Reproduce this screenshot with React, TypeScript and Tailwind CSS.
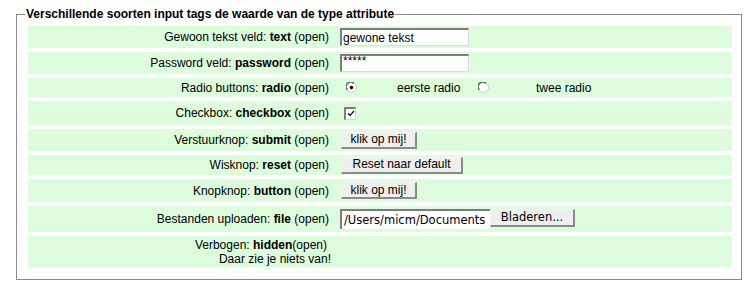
import React from 'react';

const rowBase = 'flex items-center bg-[#dcfcdc]';

const Radio = ({ checked }: { checked?: boolean }) => (
  <svg width="11" height="11" viewBox="0 0 11 11" className="block">
    <circle cx="5.5" cy="5.5" r="5" fill="#ffffff" stroke="#c8c8c8" strokeWidth="1" />
    <path d="M1.3 7.8 A4.6 4.6 0 0 1 7.8 1.3" fill="none" stroke="#6a6a6a" strokeWidth="1.6" />
    {checked && <circle cx="5.5" cy="5.5" r="1.7" fill="#000000" />}
  </svg>
);

const Checkbox = () => (
  <div className="w-[12px] h-[13px] bg-white border-t-2 border-l-2 border-r border-b border-t-[#7c7c7c] border-l-[#7c7c7c] border-r-[#d6d6d6] border-b-[#d6d6d6] flex items-center justify-center">
    <svg width="8" height="7" viewBox="0 0 8 7">
      <path d="M1 3.5 L3 5.5 L7 1" fill="none" stroke="#000" strokeWidth="1.2" />
    </svg>
  </div>
);

const Btn = ({ children, w }: { children: React.ReactNode; w: string }) => (
  <button
    type="button"
    className={`${w} h-[17px] bg-[#eeeeee] border-t border-l border-r-2 border-b-2 border-t-[#f4f4f4] border-l-[#f4f4f4] border-r-[#8a8a8a] border-b-[#8a8a8a] text-[12px] leading-none text-black flex items-center justify-center pb-[1px]`}
  >
    {children}
  </button>
);

const Label = ({ pre, bold }: { pre: string; bold: string }) => (
  <div className="w-[301px] text-right shrink-0">
    {pre} <b>{bold}</b> (open)
  </div>
);

export default function App() {
  return (
    <div className="w-[752px] h-[295px] bg-white font-['Liberation_Sans',Arial,sans-serif] text-[12px] text-black pt-[7px]">
      <fieldset className="ml-[16px] w-[726px] border border-[#8a8a8a] pl-[11px] pr-[9px] pb-[12px]">
        <legend className="-ml-[3px] px-[1px] text-[12px] font-bold leading-[14px]">
          Verschillende soorten input tags de waarde van de type attribute
        </legend>
        <div className="flex flex-col gap-[4px] mt-[5px]">
          <div className={`${rowBase} h-[22px]`}>
            <Label pre="Gewoon tekst veld:" bold="text" />
            <input
              readOnly
              value="gewone tekst"
              className="ml-[11px] w-[129px] h-[18px] bg-white border-t-2 border-l-2 border-r border-b border-t-[#7c7c7c] border-l-[#7c7c7c] border-r-[#dcdcdc] border-b-[#dcdcdc] px-[1px] text-[12px] leading-none outline-none"
            />
          </div>
          <div className={`${rowBase} h-[22px]`}>
            <Label pre="Password veld:" bold="password" />
            <div className="ml-[11px] w-[129px] h-[18px] bg-white border-t-2 border-l-2 border-r border-b border-t-[#7c7c7c] border-l-[#7c7c7c] border-r-[#dcdcdc] border-b-[#dcdcdc] px-[1px] text-[12px] leading-[11px]">
              *****
            </div>
          </div>
          <div className={`${rowBase} h-[19px]`}>
            <Label pre="Radio buttons:" bold="radio" />
            <div className="ml-[17px]">
              <Radio checked />
            </div>
            <span className="ml-[40px] w-[81px]">eerste radio</span>
            <Radio />
            <span className="ml-[47px]">twee radio</span>
          </div>
          <div className={`${rowBase} h-[24px]`}>
            <Label pre="Checkbox:" bold="checkbox" />
            <div className="ml-[15px]">
              <Checkbox />
            </div>
          </div>
          <div className={`${rowBase} h-[22px]`}>
            <Label pre="Verstuurknop:" bold="submit" />
            <div className="ml-[12px]">
              <Btn w="w-[76px]">klik op mij!</Btn>
            </div>
          </div>
          <div className={`${rowBase} h-[20px]`}>
            <Label pre="Wisknop:" bold="reset" />
            <div className="ml-[12px]">
              <Btn w="w-[122px]">Reset naar default</Btn>
            </div>
          </div>
          <div className={`${rowBase} h-[23px]`}>
            <Label pre="Knopknop:" bold="button" />
            <div className="ml-[12px]">
              <Btn w="w-[76px]">klik op mij!</Btn>
            </div>
          </div>
          <div className={`${rowBase} h-[26px]`}>
            <Label pre="Bestanden uploaden:" bold="file" />
            <div className="ml-[11px] flex items-start font-['DejaVu_Sans',sans-serif] text-[11.5px]">
              <div className="w-[150px] h-[20px] bg-white border-t-2 border-l-2 border-t-[#7c7c7c] border-l-[#7c7c7c] pl-[2px] leading-[18px] whitespace-nowrap overflow-hidden">
                /Users/micm/Documents
              </div>
              <button
                type="button"
                className="w-[85px] h-[18px] bg-[#eeeeee] border-t border-l border-r-2 border-b-2 border-t-[#f4f4f4] border-l-[#f4f4f4] border-r-[#8a8a8a] border-b-[#8a8a8a] leading-none flex items-center justify-center"
              >
                Bladeren...
              </button>
            </div>
          </div>
          <div className={`${rowBase} h-[31px]`}>
            <div className="w-[303px] text-right shrink-0 leading-[14px]">
              <div className="pr-[4px]">
                Verbogen: <b>hidden</b>(open)
              </div>
              <div>Daar zie je niets van!</div>
            </div>
          </div>
        </div>
      </fieldset>
    </div>
  );
}
